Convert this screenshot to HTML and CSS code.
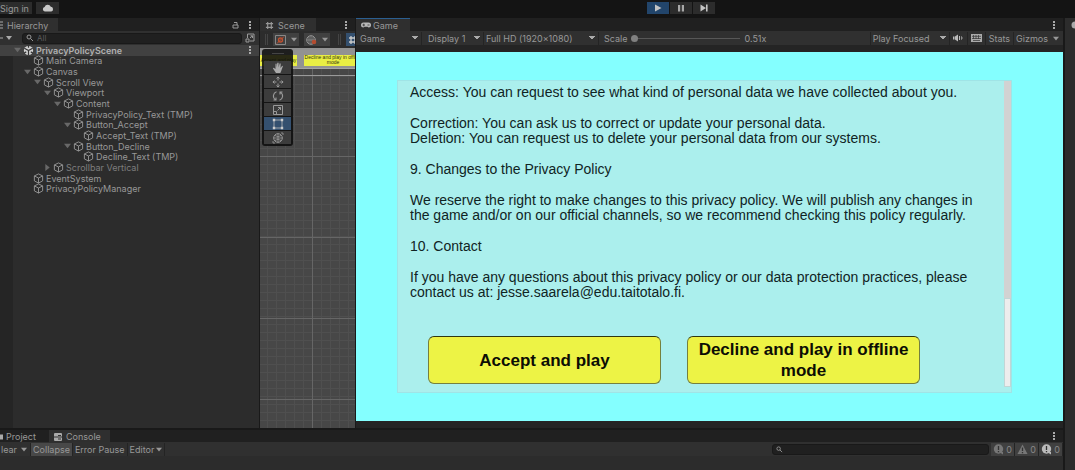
FILE: index.html
```html
<!DOCTYPE html>
<html lang="en">
<head>
<meta charset="utf-8">
<title>PrivacyPolicyScene</title>
<link rel="stylesheet" href="styles.css">
</head>
<body>
<svg class="defs" aria-hidden="true">
  <symbol id="cube" viewBox="0 0 12 12"><path d="M6 1 10.5 3.2V8.6L6 11 1.500 8.600V3.200zM1.500 3.200 6 5.500 10.500 3.200M6 5.500V11" fill="none" stroke="currentColor" stroke-width="1"/></symbol>
  <symbol id="down" viewBox="0 0 8 6"><path d="M0 0.500H8L4 5.500z" fill="currentColor"/></symbol>
  <symbol id="right" viewBox="0 0 6 8"><path d="M0.500 0V8L5.500 4z" fill="currentColor"/></symbol>
  <symbol id="dots" viewBox="0 0 2 8"><path d="M0 0H2V2H0zM0 3H2V5H0zM0 6H2V8H0z" fill="currentColor"/></symbol>
  <symbol id="search" viewBox="0 0 8 8"><path d="M5 3A2 2 0 1 1 1 3A2 2 0 1 1 5 3M4.500 4.500 7 7" fill="none" stroke="currentColor" stroke-width="1"/></symbol>
  <symbol id="grid" viewBox="0 0 10 10"><path d="M3 1V9M7 1V9M1 3H9M1 7H9" fill="none" stroke="currentColor" stroke-width="1.300"/></symbol>
</svg>
<div class="editor">
  <header class="topbar">
    <div class="account">
      <button class="signin">Sign in</button>
      <button class="cloud" aria-label="Cloud"><svg width="12" height="8" viewBox="0 0 12 8"><path d="M2.800 7.500A2.300 2.300 0 0 1 2.600 3A3.300 3.300 0 0 1 8.800 2.800A2.400 2.400 0 0 1 9.300 7.500z" fill="#c8c8c8"/></svg></button>
    </div>
    <div class="playback">
      <button class="play" aria-label="Play"><svg width="8" height="8" viewBox="0 0 8 8"><path d="M1 0.500 7.500 4 1 7.500z" fill="#c4c4c4"/></svg></button>
      <button aria-label="Pause"><svg width="8" height="8" viewBox="0 0 8 8"><path d="M1 1H3.200V7.500H1zM4.800 1H7V7.500H4.800z" fill="#a8a8a8"/></svg></button>
      <button aria-label="Step"><svg width="8" height="8" viewBox="0 0 8 8"><path d="M0.500 0.500 6 4 0.500 7.500zM6 0.500H7.600V7.500H6z" fill="#c4c4c4"/></svg></button>
    </div>
  </header>
  <div class="workspace">
    <div class="docks">
      <div class="panels">
        <section class="hierarchy">
          <div class="tabs">
            <div class="tab"><svg width="3" height="8" viewBox="0 0 3 8"><path d="M0 1H3M0 4H3M0 7H3" stroke="#aaa"/></svg>Hierarchy</div>
            <svg class="push" width="7" height="8" viewBox="0 0 7 8"><path d="M1 4H6V7H1zM2 1.500H5V4" fill="none" stroke="#999"/></svg>
            <svg class="dots" width="2" height="8"><use href="#dots"/></svg>
          </div>
          <div class="bar find">
            <button class="add" aria-label="Create"><svg width="12" height="6" viewBox="0 0 12 6"><path d="M0 2.500H3V3.500H0zM6 1H12L9 5z" fill="#aaa"/></svg></button>
            <label class="search"><svg width="8" height="8"><use href="#search"/></svg><input type="text" placeholder="All" aria-label="Search hierarchy"></label>
            <svg width="10" height="10" viewBox="0 0 10 10"><path d="M2.500 5V1H9V8H5M1 6H4V9H1zM5 5 7.500 2.800M5.500 2.800H7.500V5" fill="none" stroke="#999"/></svg>
          </div>
          <ul class="tree">
            <li class="scene-row d0"><svg class="arrow" width="7" height="6"><use href="#down"/></svg><svg width="11" height="11" viewBox="0 0 12 12"><circle cx="6" cy="6" r="5" fill="#d0d0d0"/><path d="M6 6V11M6 6 1.500 3.500M6 6 10.500 3.500M6 0V3M1 9 3.500 7.500M11 9 8.500 7.500" stroke="#333" stroke-width="1.300"/></svg>PrivacyPolicyScene<svg class="push dots" width="2" height="8"><use href="#dots"/></svg></li>
            <li class="d1"><i class="arrow"></i><svg width="11" height="11"><use href="#cube"/></svg>Main Camera</li>
            <li class="d1"><svg class="arrow" width="7" height="6"><use href="#down"/></svg><svg width="11" height="11"><use href="#cube"/></svg>Canvas</li>
            <li class="d2"><svg class="arrow" width="7" height="6"><use href="#down"/></svg><svg width="11" height="11"><use href="#cube"/></svg>Scroll View</li>
            <li class="d3"><svg class="arrow" width="7" height="6"><use href="#down"/></svg><svg width="11" height="11"><use href="#cube"/></svg>Viewport</li>
            <li class="d4"><svg class="arrow" width="7" height="6"><use href="#down"/></svg><svg width="11" height="11"><use href="#cube"/></svg>Content</li>
            <li class="d5"><i class="arrow"></i><svg width="11" height="11"><use href="#cube"/></svg>PrivacyPolicy_Text (TMP)</li>
            <li class="d5"><svg class="arrow" width="7" height="6"><use href="#down"/></svg><svg width="11" height="11"><use href="#cube"/></svg>Button_Accept</li>
            <li class="d6"><i class="arrow"></i><svg width="11" height="11"><use href="#cube"/></svg>Accept_Text (TMP)</li>
            <li class="d5"><svg class="arrow" width="7" height="6"><use href="#down"/></svg><svg width="11" height="11"><use href="#cube"/></svg>Button_Decline</li>
            <li class="d6"><i class="arrow"></i><svg width="11" height="11"><use href="#cube"/></svg>Decline_Text (TMP)</li>
            <li class="d3"><svg class="arrow" width="7" height="7"><use href="#right"/></svg><svg width="11" height="11"><use href="#cube"/></svg><span class="dim">Scrollbar Vertical</span></li>
            <li class="d1"><i class="arrow"></i><svg width="11" height="11"><use href="#cube"/></svg>EventSystem</li>
            <li class="d1"><i class="arrow"></i><svg width="11" height="11"><use href="#cube"/></svg>PrivacyPolicyManager</li>
          </ul>
        </section>

        <section class="scene">
          <div class="tabs">
            <div class="tab"><svg width="9" height="9" viewBox="0 0 10 10"><use href="#grid"/></svg>Scene</div>
            <svg class="push dots" width="2" height="8"><use href="#dots"/></svg>
          </div>
          <div class="scenebar">
            <span class="grip"></span>
            <button aria-label="Draw mode"><svg width="11" height="10" viewBox="0 0 11 10"><path d="M.500.500H10.500V9.500H.500z" fill="none" stroke="#888"/><circle cx="5.500" cy="5" r="2" fill="none" stroke="#c05030" stroke-width="1.300"/><path d="M2 8.500 9 1.500" stroke="#c05030"/></svg><svg width="6" height="5"><use href="#down"/></svg></button>
            <button aria-label="Lighting"><svg width="11" height="10" viewBox="0 0 11 10"><circle cx="5" cy="5" r="4.300" fill="none" stroke="#999"/><path d="M5 1V9M1 5H9M3 1.500V8.500M7 1.500V8.500" stroke="#999" stroke-width=".7"/><circle cx="8" cy="7" r="2.300" fill="#b44c30"/></svg><svg width="6" height="5"><use href="#down"/></svg></button>
            <span class="grip wide"></span>
            <button class="on" aria-label="Grid"><svg width="10" height="10"><use href="#grid"/></svg></button>
          </div>
          <div class="canvas">
            <div class="strip"><span class="mini first">Accept and play</span><span class="mini">Decline and play in offline<br>mode</span></div>
            <div class="tools">
              <span class="handle"></span>
              <button aria-label="Hand"><svg width="12" height="12" viewBox="0 0 12 12"><path d="M4 11 1 6.500Q1 5.500 2 6L3.500 7V2Q4 1 4.600 2V5.500L5.300 1Q6 0 6.600 1V5.500L7.600 1.500Q8.400 1 8.700 2L8.500 6 10 4Q11 3.500 10.800 4.600L9 9.500 8.300 11z" fill="#aaa"/></svg></button>
              <button aria-label="Move"><svg width="12" height="12" viewBox="0 0 12 12"><path d="M6 .8V4.500M6 7.500V11.200M.8 6H4.500M7.500 6H11.200M4.500 2.500 6 1 7.500 2.500M4.500 9.500 6 11 7.500 9.500M2.500 4.500 1 6 2.500 7.500M9.500 4.500 11 6 9.500 7.500" fill="none" stroke="#999"/></svg></button>
              <button aria-label="Rotate"><svg width="12" height="12" viewBox="0 0 12 12"><path d="M4.500 1.800A4.300 4.300 0 0 0 3.500 9.600M1.500 10H4V7.500M7.500 10.200A4.300 4.300 0 0 0 8.500 2.400M10.500 2H8V4.500" fill="none" stroke="#999" stroke-width="1.100"/></svg></button>
              <button aria-label="Scale"><svg width="12" height="12" viewBox="0 0 12 12"><path d="M1.500 1.500H10.500V10.500H1.500zM1.500 7.500H4.500V10.500M5.500 6.500 8.500 3.500M6 3.500H8.500V6" fill="none" stroke="#999"/></svg></button>
              <button class="on" aria-label="Rect"><svg width="12" height="12" viewBox="0 0 12 12"><path d="M2 2H10V10H2z" fill="none" stroke="#bbb" stroke-width=".8"/><path d="M.8.8H3.200V3.200H.8zM8.800.8H11.200V3.200H8.800zM.8 8.800H3.200V11.200H.8zM8.800 8.800H11.200V11.200H8.800z" fill="#ccc"/></svg></button>
              <button aria-label="Transform"><svg width="12" height="12" viewBox="0 0 12 12"><circle cx="6" cy="6" r="4.300" fill="none" stroke="#999"/><path d="M6 1.500V10.500M1.500 6H10.500M3 3.500Q6 6 9 3.500M3 8.500Q6 6 9 8.500M9 1H11V3M3 11H1V9" fill="none" stroke="#999" stroke-width=".8"/></svg></button>
            </div>
          </div>
        </section>

        <section class="game">
          <div class="tabs">
            <div class="tab active"><svg width="10" height="6" viewBox="0 0 10 6"><path d="M2.500.500H7.500A2.500 2.500 0 0 1 7.500 5.500L6.500 4.800H3.500L2.500 5.500A2.500 2.500 0 0 1 2.500.500z" fill="#b8b8b8"/><path d="M1.500 3H4M2.700 1.700V4.300M6.500 3H8.500" stroke="#333" stroke-width=".8"/></svg>Game</div>
            <svg class="push dots" width="2" height="8"><use href="#dots"/></svg>
          </div>
          <div class="bar gamebar">
            <select class="w-view" aria-label="View"><option>Game</option></select>
            <select class="w-display" aria-label="Display"><option>Display 1</option></select>
            <select class="w-res" aria-label="Resolution"><option>Full HD (1920x1080)</option></select>
            <label class="scale">Scale<input type="range" min="0" max="100" value="0"><span>0.51x</span></label>
            <select class="w-focus push" aria-label="Play mode"><option>Play Focused</option></select>
            <button aria-label="Mute"><svg width="10" height="8" viewBox="0 0 10 8"><path d="M0 2.500H1.500V5.500H0zM2 2.500 5 .500V7.500L2 5.500z" fill="#bbb"/><path d="M6.500 2V6M8.500 2.500Q9.500 4 8.500 5.500" fill="none" stroke="#bbb"/></svg></button>
            <button aria-label="Shortcuts"><svg width="11" height="8" viewBox="0 0 11 8"><path d="M0 0H11V8H0z" fill="#aaa"/><path d="M1 2.300H10M1 4.500H10M2.500 1V5M5 1V5M7.500 1V5M2 6.500H9" stroke="#333" stroke-width=".7"/></svg></button>
            <button>Stats</button>
            <button class="gizmos">Gizmos<svg width="6" height="5"><use href="#down"/></svg></button>
          </div>
          <div class="view">
            <div class="policy">
              <div class="content">
                <div class="copy">
                  <p>Access: You can request to see what kind of personal data we have collected about you.</p>
                  <p>Correction: You can ask us to correct or update your personal data.<br>Deletion: You can request us to delete your personal data from our systems.</p>
                  <p>9. Changes to the Privacy Policy</p>
                  <p>We reserve the right to make changes to this privacy policy. We will publish any changes in<br>the game and/or on our official channels, so we recommend checking this policy regularly.</p>
                  <p>10. Contact</p>
                  <p>If you have any questions about this privacy policy or our data protection practices, please<br>contact us at: jesse.saarela@edu.taitotalo.fi.</p>
                </div>
                <div class="choices">
                  <button>Accept and play</button>
                  <button>Decline and play in offline mode</button>
                </div>
              </div>
              <div class="track"><div class="thumb"></div></div>
            </div>
          </div>
        </section>
      </div>

      <section class="console">
        <div class="tabs">
          <div class="plain"><svg width="3" height="6" viewBox="0 0 3 6"><path d="M0 .500H3V5.500H0z" fill="#aaa"/></svg>Project</div>
          <div class="tab"><svg width="8" height="8" viewBox="0 0 8 8"><rect width="8" height="8" rx="1" fill="#aaa"/><path d="M0 4H8M4 2.500H7M4 6H7" stroke="#333"/></svg>Console</div>
          <svg class="push dots" width="2" height="8"><use href="#dots"/></svg>
        </div>
        <div class="bar consolebar">
          <button class="clear" aria-label="Clear">lear<svg width="6" height="5"><use href="#down"/></svg></button>
          <button class="pressed">Collapse</button>
          <button>Error Pause</button>
          <button class="editor-menu">Editor<svg width="6" height="5"><use href="#down"/></svg></button>
          <label class="search push"><svg width="7" height="7" viewBox="0 0 8 8"><use href="#search"/></svg><input type="text" aria-label="Search console"></label>
          <button class="count"><svg width="11" height="11" viewBox="0 0 11 11"><circle cx="5.500" cy="5" r="4.700" fill="#777"/><path d="M6 8H10V10.500z" fill="#777"/><path d="M5.500 2V6M5.500 7V8.300" stroke="#333" stroke-width="1.300"/></svg>0</button>
          <button class="count"><svg width="11" height="11" viewBox="0 0 11 11"><path d="M5.500.500 10.500 10H.500z" fill="#777"/><path d="M5.500 3.500V7M5.500 8V9.200" stroke="#333" stroke-width="1.300"/></svg>0</button>
          <button class="count"><svg width="11" height="11" viewBox="0 0 11 11"><circle cx="5.500" cy="5" r="4.700" fill="#bbb"/><path d="M6 8H10V10.500z" fill="#bbb"/><path d="M5.500 2V6M5.500 7V8.300" stroke="#333" stroke-width="1.300"/></svg>0</button>
        </div>
      </section>
    </div>
    <aside class="side">
      <div class="tabs"><svg width="4" height="8" viewBox="0 0 4 8"><path d="M4 .500A3.500 3.500 0 0 0 4 7.500z" fill="#aaa"/></svg></div>
    </aside>
  </div>
</div>
</body>
</html>
```
FILE: styles.css
```css
* { box-sizing: border-box; }
body {
  margin: 0;
  background: #191919;
  color: #989898;
  font: 9px/11px Inter, "Liberation Sans", sans-serif;
}
svg { flex: none; display: block; }
.defs { position: absolute; width: 0; height: 0; }
button, input, select { font: inherit; color: inherit; margin: 0; border: 0; padding: 0; border-radius: 0; background: none; }
button { display: flex; align-items: center; justify-content: center; white-space: nowrap; }
.push { margin-left: auto; }
.editor { min-height: 100vh; display: flex; flex-direction: column; }

.topbar { height: 18px; display: grid; grid-template-columns: 1fr auto 1fr; background: #141414; align-items: start; }
.account { display: flex; gap: 4px; padding-top: 2px; }
.account button { height: 12px; background: #2c2c2c; }
.signin { width: 32px; padding-right: 3px; }
.cloud { width: 23px; }
.playback { display: flex; gap: 1px; padding-top: 2px; grid-column: 2; margin-left: 286px; }
.playback button { width: 22px; height: 12px; background: #2c2c2c; }
.playback .play { background: #22456b; }

.workspace { flex: 1; display: flex; gap: 2px; }
.docks { flex: 1; min-width: 0; display: flex; flex-direction: column; gap: 2px; }
.side { width: 10px; background: #2c2c2c; }
.side .tabs { justify-content: end; background: #2c2c2c; padding: 0; }
.panels { flex: 1; display: grid; grid-template-columns: 259px 95px 1fr; column-gap: 1px; }
.panels > section { display: flex; flex-direction: column; min-width: 0; }

.tabs { height: 13px; display: flex; align-items: center; background: #202020; padding-right: 8px; }
.tab, .plain { height: 13px; display: flex; align-items: center; gap: 4px; padding: 1px 12px 0 4px; }
.tab { background: #2f2f2f; }
.active { border-top: 1px solid #2b5f91; padding-top: 0; }
.bar { height: 14px; display: flex; align-items: center; background: #303030; }
.dots { color: #aaa; }

.hierarchy { background: linear-gradient(90deg, #252525 13px, #2c2c2c 13px); }
.hierarchy .tab { padding-left: 0; width: 58px; }
.hierarchy .tabs { gap: 10px; }
.find { gap: 3px; padding-right: 4px; }
.add { width: 19px; height: 12px; justify-content: start; }
.search { display: flex; align-items: center; gap: 3px; flex: 1; height: 11px; padding: 0 3px; background: #202020; border: 1px solid #191919; border-radius: 3px; }
.search input { flex: 1; min-width: 0; height: 9px; font-size: 8px; outline: 0; }
.search input::placeholder { color: #5c5c5c; }
.tree { list-style: none; margin: 0; padding: 0; height: 149px; display: grid; grid-auto-rows: minmax(0, 1fr); }
.tree li { display: flex; align-items: center; gap: 2px; white-space: nowrap; }
.tree .arrow { width: 7px; color: #686868; }
.tree .scene-row { background: #414141; font-weight: 600; color: #b0b0b0; padding-right: 8px; }
.dim { color: #7d7d7d; }
.d0 { padding-left: 14px; }
.d1 { padding-left: 24px; }
.d2 { padding-left: 34px; }
.d3 { padding-left: 44px; }
.d4 { padding-left: 54px; }
.d5 { padding-left: 64px; }
.d6 { padding-left: 74px; }

.scene { background: #2c2c2c; }
.scene .tab { width: 56px; padding-left: 5px; }
.scenebar { height: 17px; display: flex; align-items: center; gap: 5px; padding-left: 5px; overflow: hidden; }
.scenebar button { flex: none; width: 26px; height: 13px; gap: 5px; background: #414141; }
.scenebar .on { width: 14px; background: #34506f; color: #ccc; }
.grip { flex: none; width: 3px; height: 11px; border: solid #444; border-width: 0 1px; }
.grip.wide { margin: 0 0 0 3px; }
.canvas {
  flex: 1; position: relative; overflow: hidden;
  background:
    linear-gradient(#9a9a9a, #9a9a9a) 0 27px / 100% 1px no-repeat,
    linear-gradient(#666 1px, transparent 1px) 0 27px / 100% 81px,
    linear-gradient(90deg, #666 1px, transparent 1px) 52px 0 / 200px 100%,
    linear-gradient(#4f4f4f 1px, transparent 1px) 0 4px / 100% 8px,
    linear-gradient(90deg, #4f4f4f 1px, transparent 1px) 7px 0 / 9px 100%,
    #474747;
}
.strip { height: 21px; padding-top: 7px; display: flex; gap: 7px; background: #929292; border-bottom: 1px solid #a5a5a5; }
.mini { flex: none; width: 58px; height: 11px; background: #e9ee44; color: #33340c; font: 5px/5px "Liberation Sans", sans-serif; text-align: center; white-space: nowrap; }
.mini.first { width: 37px; padding-top: 3px; }
.tools { position: absolute; left: 2px; top: 1px; width: 31px; padding: 0 2px 2px; border-radius: 3px; background: rgba(14, 14, 14, .88); display: flex; flex-direction: column; gap: 1px; }
.handle { height: 11px; width: 12px; margin: 0 auto; background: linear-gradient(#444, #444) 0 4px / 100% 1px no-repeat; }
.tools button { height: 13px; background: #3c3c3c; }
.tools .on { background: #34506f; }

.game { background: #242424; }
.game .tab { width: 54px; gap: 2px; padding-left: 5px; padding-right: 0; }
.gamebar { white-space: nowrap; }
.gamebar select, .gamebar button { height: 13px; border-right: 1px solid #242424; }
.gamebar select {
  appearance: none; padding: 0 3px 0 6px;
  background: linear-gradient(to bottom right, #aaa 50%, transparent 50%) right 3px center / 3px 4px no-repeat,
    linear-gradient(to bottom left, #aaa 50%, transparent 50%) right 6px center / 3px 4px no-repeat;
}
.gamebar select.w-view { width: 66px; padding-left: 4px; }
.w-display { width: 62px; }
.gamebar select.w-res { width: 115px; padding-left: 2px; }
.gamebar select.w-focus { width: 80px; padding-left: 2px; border-left: 1px solid #242424; }
.scale { display: flex; align-items: center; gap: 4px; padding-left: 5px; }
.scale input { appearance: none; width: 109px; height: 9px; background: linear-gradient(#575757, #575757) center / 100% 1px no-repeat; }
.scale input::-webkit-slider-thumb { appearance: none; width: 7px; height: 7px; border-radius: 50%; background: #808080; }
.gamebar button { min-width: 18px; padding: 0 3px; }
.gamebar .gizmos { gap: 5px; padding: 0 4px 0 2px; border: 0; }
.view { flex: 1; display: flex; margin: 7px 0; padding: 28px 51px 28px 41px; background: #84ffff; }
.policy { flex: 1; min-width: 0; display: flex; background: #abefed; border: 1px solid #a0e4e6; }
.content { flex: 1; min-width: 0; padding: 4px 12px 0 12px; color: #102424; }
.copy { font: 14px/15px "Liberation Sans", Arial, sans-serif; white-space: nowrap; }
.copy p { margin: 0 0 16px; }
.choices { display: grid; grid-template-columns: 1fr 1fr; gap: 26px; padding: 20px 72px 0 18px; }
.choices button { height: 48px; background: #edf345; border: 1px solid #75803e; border-top-color: #303810; border-radius: 6px; color: #0c0d04; font: bold 17px/21px "Liberation Sans", Arial, sans-serif; white-space: normal; }
.track { width: 7px; margin-bottom: 5px; background: #d2d2d2; display: flex; flex-direction: column; justify-content: end; }
.thumb { height: 29%; background: #ededed; border: 1px solid #c2d6d6; }

.console { height: 40px; background: #2c2c2c; }
.console .tabs, .console .tab { height: 12px; }
.console .plain { padding-left: 0; width: 49px; gap: 3px; }
.console .tab { width: 61px; padding-left: 5px; padding-right: 0; }
.consolebar button { height: 13px; padding: 0 2px; border-right: 1px solid #242424; }
.consolebar .clear { width: 31px; padding: 0 3px 0 0; gap: 4px; justify-content: end; }
.consolebar .pressed { background: #484848; }
.consolebar .editor-menu { gap: 2px; }
.consolebar .search { flex: 0 1 217px; margin-right: 2px; }
.consolebar .count { width: 24px; gap: 2px; background: #404040; color: #888; }
```
